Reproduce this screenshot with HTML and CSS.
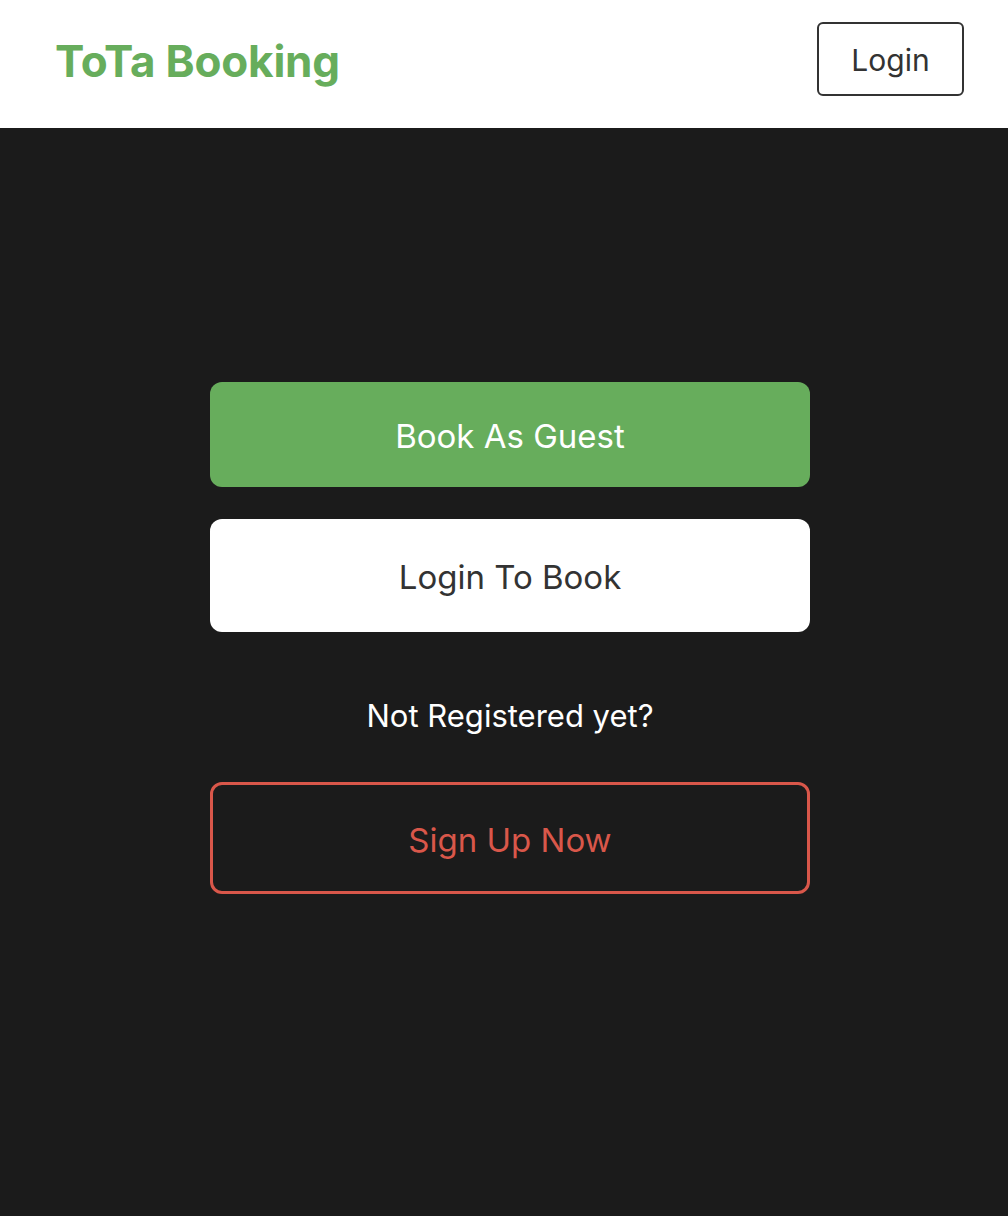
FILE: index.html
```html
<!DOCTYPE html>
<html>
<head>
<meta charset="utf-8">
<link rel="stylesheet" href="styles.css">
</head>
<body>
<header class="header">
  <div class="logo">ToTa Booking</div>
  <button class="login-btn">Login</button>
</header>
<main class="main">
  <div class="actions">
    <button class="btn btn-guest">Book As Guest</button>
    <button class="btn btn-login">Login To Book</button>
    <p class="note">Not Registered yet?</p>
    <button class="btn btn-signup">Sign Up Now</button>
  </div>
</main>
</body>
</html>
```
FILE: styles.css
```css
* { box-sizing: border-box; }
html, body { margin: 0; padding: 0; }
body {
  font-family: Inter, "Noto Sans", sans-serif;
  background: #1b1b1b;
  height: 1216px;
}
.header {
  height: 128px;
  background: #ffffff;
  display: flex;
  align-items: center;
  justify-content: space-between;
  padding: 0 44px 0 55px;
}
.logo {
  color: #67ad5c;
  font-weight: 700;
  font-size: 44px;
  letter-spacing: -0.2px;
  margin-top: -6px;
}
.login-btn {
  width: 147px;
  height: 74px;
  background: #fff;
  border: 2px solid #333;
  border-radius: 6px;
  color: #333;
  font-family: inherit;
  font-size: 30px;
  margin-top: -10px;
  padding-top: 2px;
}
.main {
  padding-top: 254px;
  padding-left: 210px;
}
.actions {
  width: 600px;
  display: flex;
  flex-direction: column;
  align-items: stretch;
}
.btn {
  font-family: inherit;
  font-size: 33px;
  border-radius: 12px;
  border: none;
  cursor: pointer;
  padding-top: 4px;
}
.btn-guest {
  height: 105px;
  background: #67ad5c;
  color: #fff;
}
.btn-login {
  margin-top: 32px;
  height: 113px;
  background: #fff;
  color: #333;
}
.note {
  margin: 66px 0 0;
  text-align: center;
  color: #fff;
  font-size: 31px;
  line-height: 36px;
}
.btn-signup {
  margin-top: 48px;
  height: 112px;
  background: transparent;
  border: 3px solid #d9574a;
  color: #d9574a;
}
```
